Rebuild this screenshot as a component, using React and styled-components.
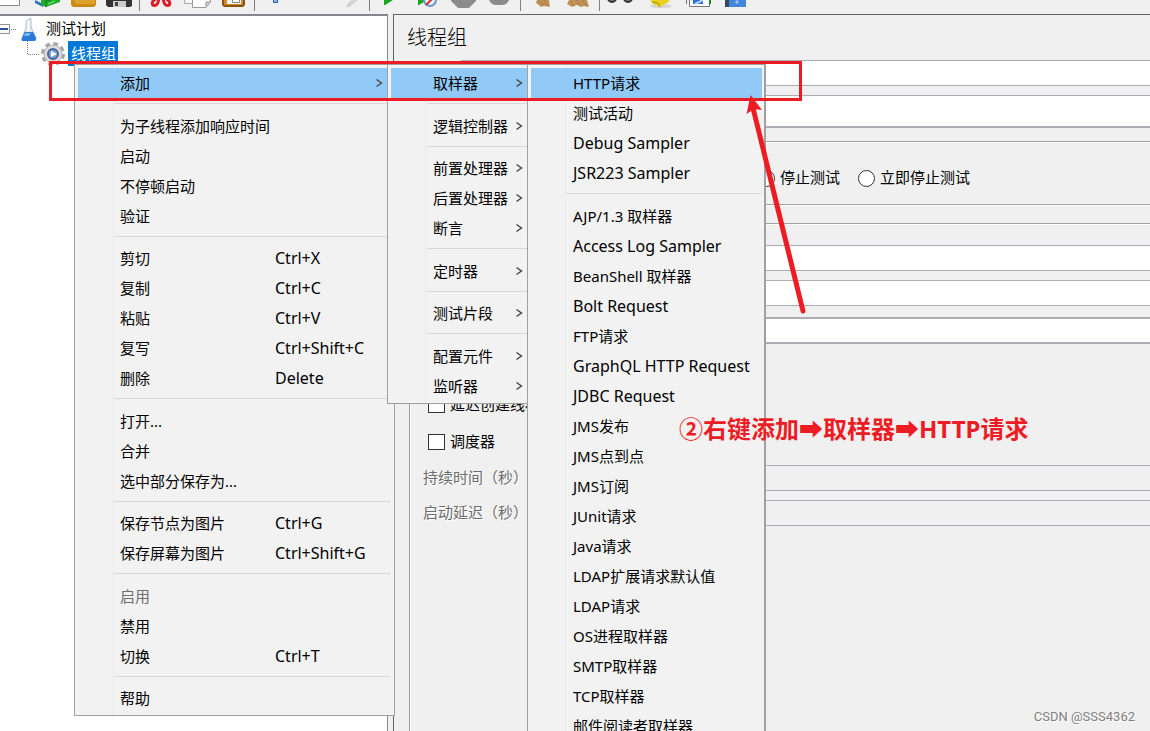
import React from 'react'
import styled, { createGlobalStyle } from 'styled-components'

const GlobalStyle = createGlobalStyle`
    :root {
        --surface: #f0f0f0;
        --line: #a0a0a0;
        --field-line: #abadb3;
        --mark: #ed1c24;
    }

    * {
        box-sizing: border-box;
    }

    body {
        margin: 0;
        background: var(--surface);
        color: #000;
        font-family: "Noto Sans", "Noto Sans CJK SC", sans-serif;
        font-size: 15px;
    }

    button, input {
        font: inherit;
        color: inherit;
    }
`

const Window = styled.div`
    position: relative;
    display: flex;
    flex-direction: column;
    height: 100vh;
    overflow: hidden;
`

/* toolbar */

const Toolbar = styled.div`
    display: flex;
    flex: none;
    height: 14px;
    margin-left: -8px;
    overflow: hidden;
`

const ToolButton = styled.button`
    flex: none;
    width: 36px;
    height: 14px;
    padding: 0;
    border: 0;
    background: none;

    svg {
        display: block;
    }
`

const ToolDivider = styled.span`
    flex: none;
    width: 1px;
    height: 11px;
    margin: 0 3px;
    background: #808080;
`

/* panes */

const Split = styled.div`
    display: flex;
    flex: 1;
    gap: 5px;
    min-height: 0;
`

const TreePane = styled.div`
    flex: 0 0 388px;
    border-top: 2px solid #828790;
    border-right: 1px solid #828790;
    background: #fff;
`

const TreeRow = styled.div`
    display: flex;
    align-items: center;
    height: 25px;
`

const TreeLabel = styled.span`
    padding: 0 2px 0 3px;
    line-height: 25px;
    background: ${props => props.$selected ? '#0078d7' : 'transparent'};
    color: ${props => props.$selected ? '#fff' : '#000'};
`

const FormPane = styled.div`
    flex: 1;
    min-width: 0;
    overflow: hidden;
    border-top: 1px solid #646464;
    border-left: 1px solid #646464;
`

const Title = styled.h1`
    margin: 0;
    padding-left: 13px;
    font-size: 20px;
    font-weight: 300;
    line-height: 45px;
`

const Rows = styled.div`
    display: flex;
    flex-direction: column;
    gap: 9px;
`

const FieldRow = styled.label`
    display: flex;
    align-items: center;
    height: ${props => props.$tall ? '30px' : '26px'};
    color: ${props => props.$disabled ? '#6d6d6d' : '#000'};
    text-shadow: ${props => props.$disabled ? '1px 1px 0 #fff' : 'none'};

    span {
        flex: none;
        width: ${props => props.$wide ? '150px' : '54px'};
        padding-bottom: 4px;
    }
`

const TextField = styled.input`
    flex: 1;
    min-width: 0;
    height: ${props => props.$thick ? '27px' : '26px'};
    padding: 0 4px;
    border: ${props => props.$thick ? '2px' : '1px'} solid var(--field-line);
    border-right: 0;
    background: #fff;

    &:disabled {
        background: var(--surface);
    }
`

const CommentField = styled(TextField)`
    height: 33px;
    border-bottom-width: 2px;
`

const Header = styled(Rows)`
    padding-left: 13px;

    label:last-child {
        height: 33px;
    }
`

const Group = styled.fieldset`
    min-width: 0;
    margin: 0;
    padding: 0;
    border: 1px solid var(--line);
    border-right: 0;
    box-shadow: inset 1px 1px 0 #fff, 0 1px 0 #fff;
`

const RadioGroup = styled(Group)`
    display: flex;
    align-items: center;
    gap: 18px;
    height: 64px;
    margin: 13px 0 18px 15px;
    padding: 10px 0 0 348px;
`

const ThreadGroup = styled(Group)`
    height: 560px;
    margin-left: 15px;
    padding: 21px 0 0 13px;
`

const ToggleLabel = styled.label`
    display: flex;
    flex: none;
    align-items: center;
    gap: 5px;
    white-space: nowrap;

    span {
        padding-bottom: 3px;
    }
`

const CheckRow = styled(ToggleLabel)`
    height: 28px;
    padding-left: 5px;
`

const Radio = styled.input`
    appearance: none;
    width: 17px;
    height: 17px;
    margin: 0;
    border: 1px solid #333;
    border-radius: 50%;
    background: #fff;
`

const Check = styled(Radio)`
    height: 16px;
    border-radius: 0;
`

/* context menus */

const Menu = styled.div`
    position: absolute;
    top: 64px;
    left: ${props => props.$left}px;
    width: ${props => props.$width}px;
    padding: 3px ${props => props.$last ? '2px' : '3px'} 2px 3px;
    border: 1px solid var(--line);
    border-right-width: ${props => props.$last ? '2px' : '1px'};
    background: linear-gradient(to right, transparent 37px, #ebebeb 37px, #ebebeb 38px, transparent 38px) #f2f2f2;

    hr {
        height: 1px;
        margin: 5px 1px 7px 36px;
        border: 0;
        background: #d7d7d7;
    }

    hr:nth-of-type(even) {
        margin-bottom: 6px;
    }
`

const MenuItem = styled.button`
    display: flex;
    align-items: center;
    width: 100%;
    height: 30px;
    padding: 0 8px 2px 42px;
    border: 0;
    background: ${props => props.$open ? '#91c9f7' : 'none'};
    text-align: left;
    white-space: nowrap;

    &:disabled {
        color: #6d6d6d;
    }

    svg {
        margin: 2px 0 0 auto;
    }
`

const ItemName = styled.span`
    flex: ${props => props.$fixed ? '0 0 155px' : 'none'};
    padding-top: ${props => props.$latin ? '2px' : '0'};
    font-size: ${props => props.$latin ? '16px' : '15px'};
`

const Shortcut = styled.span`
    padding-top: 2px;
    font-size: 16px;
`

/* notes drawn over the window */

const Frame = styled.div`
    position: absolute;
    top: 61px;
    left: 49px;
    width: 753px;
    height: 40px;
    border: 3px solid var(--mark);
    pointer-events: none;
`

const Arrow = styled.svg`
    position: absolute;
    top: 90px;
    left: 740px;
    pointer-events: none;
`

const Note = styled.p`
    position: absolute;
    top: 411px;
    left: 679px;
    margin: 0;
    color: var(--mark);
    font-size: 24px;
    font-weight: 700;
    line-height: 36px;
    white-space: nowrap;
`

const Watermark = styled.span`
    position: absolute;
    right: 15px;
    bottom: 6px;
    color: #808080;
    font-family: Roboto, "Liberation Sans", sans-serif;
    font-size: 13px;
    line-height: 16px;
    text-shadow: 1px 1px 0 #fff;
`

const tools = [
    [
        ['新建', <path d="M0 -4H27.500V5.500H0Z" fill="#fff" stroke="#888" />],
        ['模板', <><path d="M7 0L15 4V7L7 3Z" fill="#2b6fc4" /><path d="M13 0H32V2L18 7L13 5Z" fill="#1fae2b" /><path d="M18 7V1L32 -3" stroke="#0c7d18" fill="none" /><path d="M20 4L27 1" stroke="#8df08d" /></>],
        ['打开', <><path d="M7 0H32V5L30 7H9L7 5Z" fill="#c98a14" /><path d="M10 0H31V4H12Z" fill="#dda22b" /></>],
        ['保存', <><path d="M6 0H32V6L30 7H8L6 5Z" fill="#333" /><path d="M13 1H26V7H13Z" fill="#ccc" /><path d="M15 2H18V6H15Z" fill="#444" /></>]
    ],
    [
        ['剪切', <g fill="none" stroke="#d81f2a" strokeWidth="3"><path d="M15 -3L10 1Q8 5 11 5.500Q15 6 16 -2" /><path d="M21 -3L26 1Q28 5 25 5.500Q21 6 20 -2" /></g>],
        ['复制', <><path d="M5.500 -2H20V3.500H5.500Z" fill="#f6f6f6" stroke="#aaa" /><path d="M13.500 -2H31.500V2L27 7.500H13.500Z" fill="#fff" stroke="#999" /><path d="M27 7V2H31" fill="#ccc" stroke="#999" /></>],
        ['粘贴', <><path d="M7 0H30V5L28 7H9L7 5Z" fill="#8a5212" /><path d="M9 0H28V5H9Z" fill="#d08a2a" /><path d="M12 0H26V4H12Z" fill="#f4f4f4" /><path d="M17.500 -1H24.500V2.500H17.500Z" fill="#fff" stroke="#888" /></>]
    ],
    [
        ['展开', <path d="M15.500 -1H19.500V2.500H15.500Z" fill="#8db4e8" stroke="#2c5fae" />],
        ['折叠', null],
        ['切换', <><path d="M17 7L19 3L25 -2L28 -1L21 5Z" fill="#dcdcdc" stroke="#c2c2c2" /></>]
    ],
    [
        ['启动', <path d="M11 -5L20 0L12 5H11Z" fill="#14a81b" />],
        ['不停顿启动', <><path d="M9 -5L18 0L10 5H9Z" fill="#14a81b" /><circle cx="21" cy="0" r="6" fill="#e6eef8" stroke="#6f9ad0" strokeWidth="2" /><path d="M17 5L25 -3" stroke="#dc2a2a" strokeWidth="2" /></>],
        ['停止', <path d="M6 -2H31V1L24 8H13L6 1Z" fill="#8c8c8c" />],
        ['关闭', <path d="M8 -2H28V0Q26 5 21 5H15Q10 5 8 0Z" fill="#8c8c8c" />]
    ],
    [
        ['清除', <><path d="M13 0H25L26 7L20 6L17 7L12 3Z" fill="#c19257" /><path d="M15 1L20 5M20 0L24 6" stroke="#a67c45" /></>],
        ['清除全部', <><path d="M9 0H27L29 7L24 6L21 7L17 5L12 7L7 4Z" fill="#c19257" /><path d="M11 1L14 6M16 0L21 6M22 0L27 6" stroke="#a67c45" /></>]
    ],
    [
        ['查找', <g fill="#8a7a74" stroke="#333" strokeWidth="2"><circle cx="9" cy="-2" r="4" /><circle cx="25" cy="-2" r="4" /></g>],
        ['重置', <><ellipse cx="22" cy="6" rx="11" ry="2" fill="#d4d4d4" /><path d="M11 0L22 -4L31 1L21 7L14 4Z" fill="#e8d21d" /><path d="M13 2L19 3L21 7" stroke="#a58c0c" fill="none" /></>],
        ['函数助手', <><path d="M11.500 -2V4M14.500 -2H34.500V6.500H14.500Z" fill="#fff" stroke="#777" /><path d="M18 0H28V4H18Z" fill="#2c6de0" /><path d="M28 0L20 4" stroke="#bcd4ff" strokeWidth="2" /><path d="M35 0V4" stroke="#1a8b25" strokeWidth="2" /></>],
        ['帮助', <><path d="M14 0H35V7H14Z" fill="#3f86dc" /><path d="M14 0H18V7H14Z" fill="#39465c" /><path d="M26 0V4M24 2H28" stroke="#b8d6fa" /></>]
    ]
]

const addMenu = [
    { name: '添加', sub: true, open: true },
    null,
    { name: '为子线程添加响应时间' },
    { name: '启动' },
    { name: '不停顿启动' },
    { name: '验证' },
    null,
    { name: '剪切', keys: 'Ctrl+X' },
    { name: '复制', keys: 'Ctrl+C' },
    { name: '粘贴', keys: 'Ctrl+V' },
    { name: '复写', keys: 'Ctrl+Shift+C' },
    { name: '删除', keys: 'Delete' },
    null,
    { name: '打开...' },
    { name: '合并' },
    { name: '选中部分保存为...' },
    null,
    { name: '保存节点为图片', keys: 'Ctrl+G' },
    { name: '保存屏幕为图片', keys: 'Ctrl+Shift+G' },
    null,
    { name: '启用', disabled: true },
    { name: '禁用' },
    { name: '切换', keys: 'Ctrl+T' },
    null,
    { name: '帮助' }
]

const typeMenu = [
    { name: '取样器', sub: true, open: true },
    null,
    { name: '逻辑控制器', sub: true },
    null,
    { name: '前置处理器', sub: true },
    { name: '后置处理器', sub: true },
    { name: '断言', sub: true },
    null,
    { name: '定时器', sub: true },
    null,
    { name: '测试片段', sub: true },
    null,
    { name: '配置元件', sub: true },
    { name: '监听器', sub: true }
]

const samplerMenu = [
    { name: 'HTTP请求', open: true },
    { name: '测试活动' },
    { name: 'Debug Sampler', latin: true },
    { name: 'JSR223 Sampler', latin: true },
    null,
    { name: 'AJP/1.3 取样器' },
    { name: 'Access Log Sampler', latin: true },
    { name: 'BeanShell 取样器' },
    { name: 'Bolt Request', latin: true },
    { name: 'FTP请求' },
    { name: 'GraphQL HTTP Request', latin: true },
    { name: 'JDBC Request', latin: true },
    { name: 'JMS发布' },
    { name: 'JMS点到点' },
    { name: 'JMS订阅' },
    { name: 'JUnit请求' },
    { name: 'Java请求' },
    { name: 'LDAP扩展请求默认值' },
    { name: 'LDAP请求' },
    { name: 'OS进程取样器' },
    { name: 'SMTP取样器' },
    { name: 'TCP取样器' },
    { name: '邮件阅读者取样器' }
]

const errorActions = ['停止测试', '立即停止测试']

const ContextMenu = ({ items, left, width, last }) => (
    <Menu role="menu" $left={left} $width={width} $last={last}>
        {items.map((item, index) => item
            ? (
                <MenuItem key={index} role="menuitem" $open={item.open} disabled={item.disabled}>
                    <ItemName $fixed={!!item.keys} $latin={item.latin}>{item.name}</ItemName>
                    {item.keys && <Shortcut>{item.keys}</Shortcut>}
                    {item.sub && (
                        <svg width="8" height="10" viewBox="0 0 8 10" fill="none" stroke="#444" strokeWidth="1.4">
                            <path d="M1.500 1.500L6.500 5L1.500 8.500" />
                        </svg>
                    )}
                </MenuItem>
            )
            : <hr key={index} />
        )}
    </Menu>
)

const FlaskIcon = () => (
    <svg width="43" height="25" viewBox="0 0 43 25">
        <path d="M-6 8.500H9.500V17.500H-6Z" fill="#fafafa" stroke="#919191" />
        <path d="M-2 13H8" stroke="#2c4f9e" strokeWidth="2" />
        <path d="M11 13.500H16" stroke="#808080" strokeDasharray="1 1" />
        <path d="M26 5L31 2V11L36 22Q36 25 34 25H23Q21 25 22 22L26 12Z" fill="#dfe8f1" stroke="#b4c1ce" />
        <path d="M24.500 16H33L36 22Q36 25 34 25H23Q21 25 22 22Z" fill="#2a79d8" />
        <path d="M25 17H31L29 20H24Z" fill="#79b4f2" />
        <path d="M28.500 5V15" stroke="#fff" strokeWidth="2" />
    </svg>
)

const GearIcon = () => (
    <svg width="68" height="25" viewBox="0 0 68 25">
        <path d="M27.500 0V13.500H40" fill="none" stroke="#808080" strokeDasharray="1 1" />
        <circle cx="53" cy="13" r="10" fill="none" stroke="#a6a6a6" strokeWidth="4" strokeDasharray="4.500 3.354" />
        <circle cx="53" cy="13" r="9" fill="#dcdcdc" stroke="#b4b4b4" />
        <circle cx="53" cy="13" r="5" fill="#7fa3dc" stroke="#4a6796" strokeWidth="2" />
        <path d="M51 10L57 13L51 16Z" fill="#fff" />
    </svg>
)

const App = () => (
    <Window>
        <GlobalStyle />
        <Toolbar>
            {tools.map((group, index) => (
                <React.Fragment key={index}>
                    {index > 0 && <ToolDivider />}
                    {group.map(([name, icon]) => (
                        <ToolButton key={name} aria-label={name}>
                            <svg width="36" height="14" viewBox="0 0 36 14">{icon}</svg>
                        </ToolButton>
                    ))}
                </React.Fragment>
            ))}
        </Toolbar>

        <Split>
            <TreePane>
                <TreeRow>
                    <FlaskIcon />
                    <TreeLabel>测试计划</TreeLabel>
                </TreeRow>
                <TreeRow>
                    <GearIcon />
                    <TreeLabel $selected>线程组</TreeLabel>
                </TreeRow>
            </TreePane>

            <FormPane>
                <Title>线程组</Title>
                <Header>
                    <FieldRow><span /><TextField aria-label="名称" /></FieldRow>
                    <FieldRow><span /><CommentField aria-label="注释" /></FieldRow>
                </Header>
                <RadioGroup>
                    {errorActions.map(name => (
                        <ToggleLabel key={name}>
                            <Radio type="radio" name="error-action" />
                            <span>{name}</span>
                        </ToggleLabel>
                    ))}
                </RadioGroup>
                <ThreadGroup>
                    <Rows>
                        <FieldRow $wide><span /><TextField aria-label="线程数" /></FieldRow>
                        <FieldRow $wide><span /><TextField aria-label="Ramp-Up时间（秒）" /></FieldRow>
                        <FieldRow $wide $tall><span /><TextField $thick aria-label="循环次数" /></FieldRow>
                        <CheckRow><Check type="checkbox" aria-label="每次迭代使用同一用户" /></CheckRow>
                        <CheckRow><Check type="checkbox" /><span>延迟创建线程</span></CheckRow>
                        <CheckRow><Check type="checkbox" /><span>调度器</span></CheckRow>
                        <FieldRow $wide $disabled><span>持续时间（秒）</span><TextField disabled /></FieldRow>
                        <FieldRow $wide $disabled><span>启动延迟（秒）</span><TextField disabled /></FieldRow>
                    </Rows>
                </ThreadGroup>
            </FormPane>
        </Split>

        <ContextMenu items={addMenu} left={74} width={321} />
        <ContextMenu items={typeMenu} left={387} width={148} />
        <ContextMenu items={samplerMenu} left={527} width={239} last />

        <Frame />
        <Arrow width="70" height="230" viewBox="0 0 70 230">
            <path d="M13 18L63 221" stroke="#ed1c24" strokeWidth="5" strokeLinecap="round" />
            <path d="M10.500 5L22 20L14 19L6.500 24Z" fill="#ed1c24" />
        </Arrow>
        <Note>②右键添加➡取样器➡HTTP请求</Note>
        <Watermark>CSDN @SSS4362</Watermark>
    </Window>
)

export default App
